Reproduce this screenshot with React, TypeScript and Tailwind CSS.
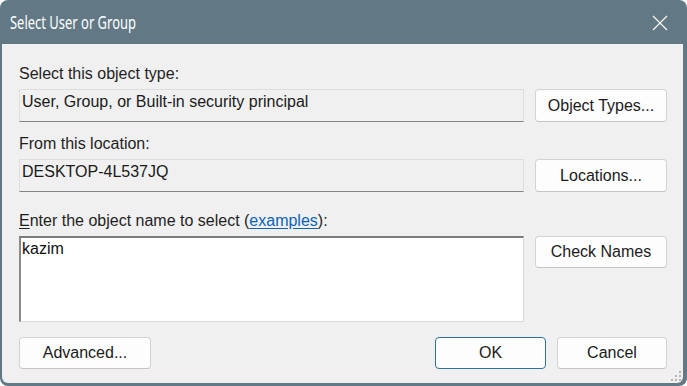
import React from "react";

function Btn({ label, w, def }: { label: string; w: string; def?: boolean }) {
  return (
    <div
      className={`flex h-[32px] ${w} items-center justify-center rounded-[4px] border bg-[#fdfdfd] text-[#1b1b1b] ${
        def ? "border-[#2f6f9f]" : "border-[#d3d3d3] border-b-[#c4c4c4]"
      }`}
    >
      {label}
    </div>
  );
}

function Field({ value }: { value: string }) {
  return (
    <div className="h-[33px] border border-[#dedede] border-b-[#858585] bg-[#f0f0f0] pl-[2px] pt-[2px] text-[#1a1a1a]">
      {value}
    </div>
  );
}

export default function App() {
  return (
    <div className="h-[386px] w-[687px] bg-white">
      <div className="flex h-full flex-col rounded-lg bg-[#627985] pb-[3px] pl-[2px] pr-[4px]">
        {/* title bar */}
        <div className="flex h-[44px] shrink-0 items-center justify-between pl-[8px] pr-[15px]">
          <span className="inline-block origin-left scale-x-[0.72] font-['Noto_Sans',sans-serif] text-[18px] leading-none text-white">
            Select User or Group
          </span>
          <svg width="16" height="16" viewBox="0 0 16 16" className="mt-[1px]">
            <path d="M1 1L15 15M15 1L1 15" stroke="#ffffff" strokeWidth="1.1" />
          </svg>
        </div>

        <div className="relative flex-1 rounded-b-[6px] bg-[#f0f0f0] pl-[17px] pr-[16px] pt-[20px] font-['Liberation_Sans',Arial,sans-serif] text-[16px] leading-[20px] text-[#1f1f1f]">
          <div>Select this object type:</div>
          <div className="mt-[5px] grid grid-cols-[505px_132px] gap-x-[11px]">
            <Field value="User, Group, or Built-in security principal" />
            <div className="flex h-[33px] items-center justify-center rounded-[4px] border border-[#d3d3d3] border-b-[#c4c4c4] bg-[#fdfdfd] text-[#1b1b1b]">
              Object Types...
            </div>
          </div>

          <div className="mt-[12px]">From this location:</div>
          <div className="mt-[5px] grid grid-cols-[505px_132px] gap-x-[11px]">
            <Field value="DESKTOP-4L537JQ" />
            <div className="flex h-[33px] items-center justify-center rounded-[4px] border border-[#d3d3d3] border-b-[#c4c4c4] bg-[#fdfdfd] text-[#1b1b1b]">
              Locations...
            </div>
          </div>

          <div className="mt-[19px]">
            <span className="underline underline-offset-2">E</span>nter the object name to select (
            <span className="text-[#0b63b6] underline underline-offset-2">examples</span>):
          </div>
          <div className="mt-[5px] grid grid-cols-[505px_132px] items-start gap-x-[11px]">
            <div className="h-[86px] border-b border-l-2 border-r border-t-2 border-b-[#dadada] border-l-[#8a8a8a] border-r-[#dadada] border-t-[#7b7b7b] bg-white pl-[1px] pt-[1px] text-[#111]">
              kazim
            </div>
            <Btn label="Check Names" w="w-[132px]" />
          </div>

          <div className="mt-[15px] flex justify-between">
            <Btn label="Advanced..." w="w-[132px]" />
            <div className="flex gap-[11px]">
              <Btn label="OK" w="w-[111px]" def />
              <Btn label="Cancel" w="w-[110px]" />
            </div>
          </div>

          {/* resize grip */}
          <svg width="11" height="11" viewBox="0 0 11 11" className="absolute bottom-[1px] right-[1px]">
            <g fill="#b4b4b4">
              <rect x="8" y="0" width="2" height="2" />
              <rect x="4" y="4" width="2" height="2" />
              <rect x="8" y="4" width="2" height="2" />
              <rect x="0" y="8" width="2" height="2" />
              <rect x="4" y="8" width="2" height="2" />
              <rect x="8" y="8" width="2" height="2" />
            </g>
          </svg>
        </div>
      </div>
    </div>
  );
}
